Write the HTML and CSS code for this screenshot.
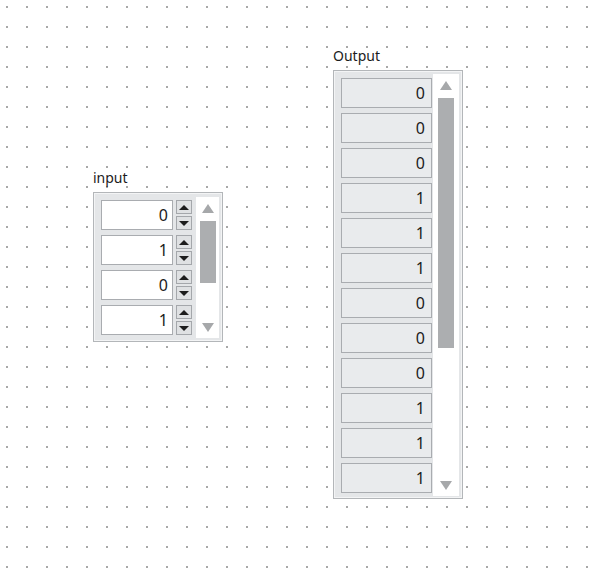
FILE: index.html
```html
<!DOCTYPE html>
<html lang="en">
<head>
    <meta charset="UTF-8">
    <meta name="viewport" content="width=device-width, initial-scale=1.0">
    <title>Front Panel</title>
    <link rel="stylesheet" href="styles.css">
</head>
<body>
    <div class="panel">

        <!-- input array: numeric controls with spin buttons -->
        <div class="cluster input-cluster">
            <div class="label">input</div>
            <div class="frame">
                <div class="items">
                    <div class="row">
                        <div class="num control">0</div>
                        <div class="spin"><button class="up"></button><button class="down"></button></div>
                    </div>
                    <div class="row">
                        <div class="num control">1</div>
                        <div class="spin"><button class="up"></button><button class="down"></button></div>
                    </div>
                    <div class="row">
                        <div class="num control">0</div>
                        <div class="spin"><button class="up"></button><button class="down"></button></div>
                    </div>
                    <div class="row">
                        <div class="num control">1</div>
                        <div class="spin"><button class="up"></button><button class="down"></button></div>
                    </div>
                </div>
                <div class="scroll">
                    <span class="arrow arrow-up"></span>
                    <div class="track"><div class="thumb"></div></div>
                    <span class="arrow arrow-down"></span>
                </div>
            </div>
        </div>

        <!-- output array: indicators -->
        <div class="cluster output-cluster">
            <div class="label">Output</div>
            <div class="frame">
                <div class="items">
                    <div class="num indicator">0</div>
                    <div class="num indicator">0</div>
                    <div class="num indicator">0</div>
                    <div class="num indicator">1</div>
                    <div class="num indicator">1</div>
                    <div class="num indicator">1</div>
                    <div class="num indicator">0</div>
                    <div class="num indicator">0</div>
                    <div class="num indicator">0</div>
                    <div class="num indicator">1</div>
                    <div class="num indicator">1</div>
                    <div class="num indicator">1</div>
                </div>
                <div class="scroll">
                    <span class="arrow arrow-up"></span>
                    <div class="track"><div class="thumb"></div></div>
                    <span class="arrow arrow-down"></span>
                </div>
            </div>
        </div>

    </div>
</body>
</html>
```

FILE: styles.css
```css
* {
    box-sizing: border-box;
}

body {
    margin: 0;
    font-family: "Noto Sans", "Open Sans", sans-serif;
    color: #1c1c1c;
    background-color: #ffffff;
}

.panel {
    position: relative;
    width: 597px;
    height: 586px;
    background-image: radial-gradient(circle at 1px 1px, #a8a8a8 0.8px, transparent 1.1px);
    background-size: 20px 20px;
    background-position: 6px 6px;
}

.cluster {
    position: absolute;
}

.input-cluster {
    left: 93px;
    top: 168px;
}

.output-cluster {
    left: 333px;
    top: 46px;
}

.label {
    font-size: 14px;
    line-height: 19px;
    height: 19px;
    margin-bottom: 5px;
}

.frame {
    display: flex;
    width: 130px;
    background-color: #e4e6e8;
    border: 1px solid #b3b6b9;
    box-shadow: inset 0 0 0 1px #f3f4f5;
}

.input-cluster .frame {
    padding: 4px 3px 3px 7px;
}

.output-cluster .frame {
    padding: 3px 3px 2px 7px;
}

.items {
    display: flex;
    flex-direction: column;
    gap: 5px;
}

.input-cluster .items {
    padding-top: 3px;
}

.output-cluster .items {
    padding-top: 4px;
}

.row {
    display: flex;
    gap: 3px;
}

.num {
    height: 30px;
    display: flex;
    align-items: center;
    justify-content: flex-end;
    font-size: 16px;
    border: 1px solid #a9acb0;
}

.control {
    width: 72px;
    padding-right: 4px;
    background-color: #ffffff;
}

.indicator {
    width: 91px;
    padding-right: 6px;
    background-color: #e9ebed;
}

.spin {
    display: flex;
    flex-direction: column;
    justify-content: space-between;
    height: 30px;
}

.spin button {
    width: 16px;
    height: 14px;
    padding: 0;
    border: 1px solid #a4a7ab;
    background-color: #dfe1e3;
    display: flex;
    align-items: center;
    justify-content: center;
}

.spin button::after {
    content: "";
    border-left: 5px solid transparent;
    border-right: 5px solid transparent;
}

.spin .up::after {
    border-bottom: 5px solid #1c1c1c;
}

.spin .down::after {
    border-top: 5px solid #1c1c1c;
}

.scroll {
    display: flex;
    flex-direction: column;
    align-items: center;
    background-color: #ffffff;
}

.input-cluster .scroll {
    width: 23px;
    height: 141px;
    margin-left: 4px;
}

.output-cluster .scroll {
    width: 26px;
    height: 422px;
    margin-left: 1px;
}

.arrow {
    height: 22px;
    display: flex;
    align-items: center;
    justify-content: center;
}

.arrow::after {
    content: "";
    border-left: 6px solid transparent;
    border-right: 6px solid transparent;
}

.arrow-up::after {
    border-bottom: 9px solid #a6a8aa;
}

.arrow-down::after {
    border-top: 9px solid #a6a8aa;
}

.track {
    flex: 1;
    width: 16px;
}

.thumb {
    width: 16px;
    margin-top: 2px;
    background-color: #acaeb0;
}

.input-cluster .thumb {
    height: 62px;
}

.output-cluster .thumb {
    height: 250px;
}
```
